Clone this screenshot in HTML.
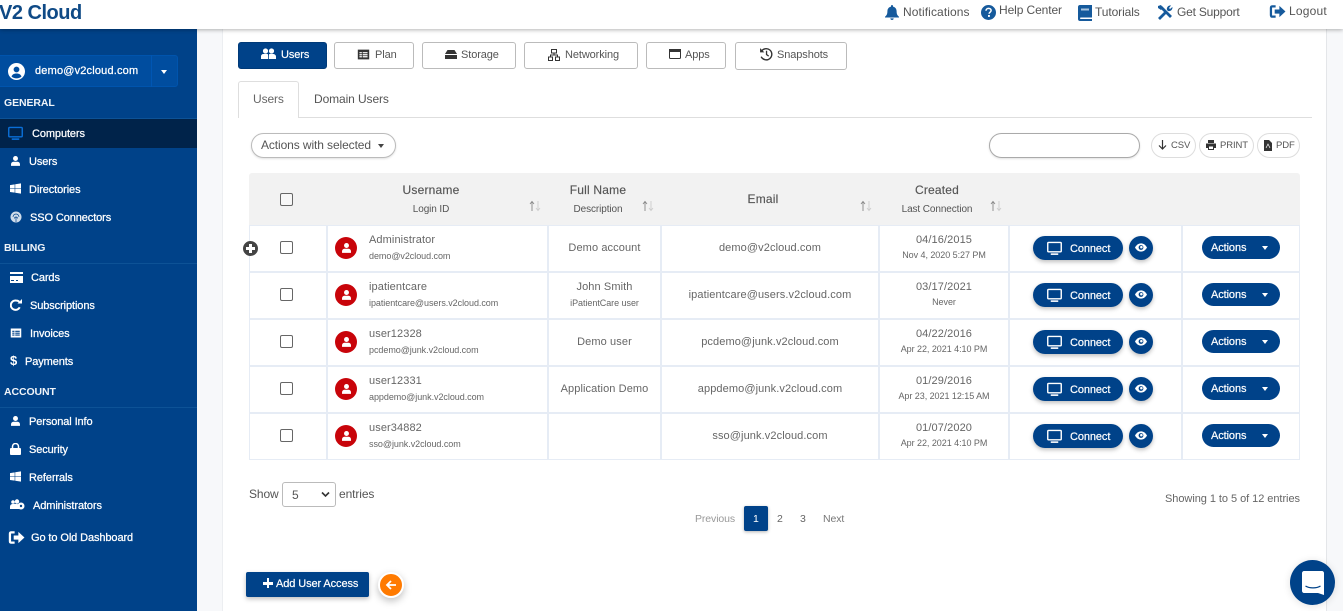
<!DOCTYPE html>
<html><head><meta charset="utf-8"><title>V2 Cloud</title>
<style>
*{box-sizing:border-box}
html,body{margin:0;padding:0;width:1343px;height:611px;overflow:hidden;background:#f7f8fa;font-family:"Liberation Sans",sans-serif;color:#555}
.a,.t,svg.i{position:absolute}
.t{white-space:nowrap;line-height:14px;font-size:12px;letter-spacing:-.1px}
.c{text-align:center}
.top{color:#555;font-size:12px;top:5px}
.s{color:#fff;font-size:11px;font-weight:400;-webkit-text-stroke:.25px #fff;transform:translateY(1px)}
.h{color:#f0f4f9;font-size:10.5px;font-weight:700;left:4px;transform:translateY(1px)}
.b{height:27px;top:42px;border:1px solid #bbb;border-radius:3px;background:#fff}
.bt{font-size:11px;color:#555;top:47px;transform:translateY(1px)}
.sm{font-size:9px;color:#666;letter-spacing:-.05px}
.hs{font-size:10px;color:#555;top:203px;letter-spacing:-.1px}
.hd{font-size:12px;color:#555;letter-spacing:.2px;-webkit-text-stroke:.15px #555}
.n{font-size:11px;color:#666;letter-spacing:.1px;transform:translateY(1px)}
.cb{width:13px;height:13px;border:1px solid #666;border-radius:2px;left:280px;background:#fff}
.av{width:22px;height:22px;border-radius:50%;background:#c8040a;left:335px}
.con{left:1033px;width:90px;height:24px;border-radius:12px;background:#004289;box-shadow:0 2px 4px rgba(0,0,0,.25)}
.eye{left:1129px;width:24px;height:24px;border-radius:50%;background:#004289;box-shadow:0 2px 4px rgba(0,0,0,.25)}
.act{width:78px;height:23px;border-radius:12px;background:#004289;left:1202px}
.w{color:#fff;font-size:11px;-webkit-text-stroke:.2px #fff;transform:translateY(1px)}
.p{border:1px solid #ddd;border-radius:14px;height:25px;top:133px;background:#fff}
.pg{font-size:10.5px;top:511px;transform:translateY(1px)}
.car{width:0;height:0;border-left:3.5px solid transparent;border-right:3.5px solid transparent;border-top:4px solid #fff}
</style></head><body>
<svg width="0" height="0" style="position:absolute"><defs>
<symbol id="user" viewBox="0 0 16 16"><circle cx="8" cy="4.4" r="3.6" fill="currentColor"/><path d="M1.5 15v-2.2C1.5 10.4 3.4 9 5.5 9h5c2.1 0 4 1.4 4 3.8V15z" fill="currentColor"/></symbol>
<symbol id="win" viewBox="0 0 16 16"><path d="M0 3l6.8-1v5.6H0zM7.6 1.8L16 .6v7H7.6zM0 8.4h6.8V14L0 13zM7.6 8.4H16v7l-8.4-1.2z" fill="currentColor"/></symbol>
<symbol id="mon" viewBox="0 0 16 16"><rect x=".8" y="1.5" width="14.4" height="10" rx="1" fill="none" stroke="currentColor" stroke-width="1.5"/><path d="M4 14h8" stroke="currentColor" stroke-width="1.7"/></symbol>
<symbol id="exit" viewBox="0 0 18 16"><path d="M7 2.5H3.5C2.5 2.5 2 3 2 4v8c0 1 .5 1.5 1.5 1.5H7" fill="none" stroke="currentColor" stroke-width="2.4"/><path d="M6 5.8h5V2l6.5 6-6.5 6v-3.8H6z" fill="currentColor"/></symbol>
<symbol id="eye" viewBox="0 0 16 12"><path d="M0 6c2-3.6 4.8-5.5 8-5.5S14 2.4 16 6c-2 3.6-4.8 5.5-8 5.5S2 9.6 0 6z" fill="#fff"/><circle cx="8" cy="6" r="3.2" fill="#004289"/><circle cx="8.5" cy="5.5" r="1.7" fill="#fff"/></symbol>
<symbol id="sort" viewBox="0 0 12 12"><path d="M3 11V2M1 4l2-2.500L5 4" fill="none" stroke="#888" stroke-width=".9"/><path d="M9 1v9M7 8l2 2.500L11 8" fill="none" stroke="#ccc" stroke-width=".9"/></symbol>
<symbol id="tbl" viewBox="0 0 16 16"><path fill-rule="evenodd" d="M1 2h14v12H1zM6 5H3v1.5h3zm7 0H7v1.5h6zM6 7.5H3V9h3zm7 0H7V9h6zM6 10H3v1.5h3zm7 0H7v1.5h6z" fill="currentColor"/></symbol>
</defs></svg>

<!-- panel -->
<div class="a" style="left:222px;top:29px;width:1105px;height:582px;background:#fff;border-left:1px solid #eceef1;border-right:1px solid #e4e6e9"></div>

<!-- sidebar -->
<div class="a" style="left:0;top:29px;width:197px;height:582px;background:#004289"></div>
<div class="a" style="left:-3px;top:55px;width:181px;height:32px;background:#004d9f;border:1px solid #0054ad;border-radius:3px"></div>
<div class="a" style="left:151px;top:55px;width:1px;height:32px;background:#0056b3"></div>
<svg class="i" style="left:8px;top:63px;color:#fff" width="17" height="17" viewBox="0 0 17 17"><circle cx="8.5" cy="8.5" r="8.5" fill="#fff"/><circle cx="8.5" cy="6.5" r="2.9" fill="#004d9f"/><path d="M3.500 13.500c.8-2 2.400-3 5-3s4.200 1 5 3c-1.400 1.300-3 1.900-5 1.900s-3.600-.6-5-1.900z" fill="#004d9f"/></svg>
<div class="t s" style="left:35px;top:63px;font-size:11px;letter-spacing:.18px">demo@v2cloud.com</div>
<div class="a car" style="left:161px;top:70px"></div>
<div class="t h" style="top:95px">GENERAL</div>
<div class="a" style="left:0;top:118px;width:197px;height:1px;background:#0d5296"></div>
<div class="a" style="left:0;top:119px;width:197px;height:29px;background:#00234a"></div>
<svg class="i" style="left:8px;top:126px;color:#0a6fd8" width="15" height="15"><use href="#mon"/></svg>
<div class="t s" style="left:32px;top:126px">Computers</div>
<svg class="i" style="left:10px;top:155px;color:#fff" width="11" height="12"><use href="#user"/></svg>
<div class="t s" style="left:29px;top:154px">Users</div>
<svg class="i" style="left:10px;top:183px;color:#fff" width="11" height="11"><use href="#win"/></svg>
<div class="t s" style="left:29px;top:182px">Directories</div>
<svg class="i" style="left:10px;top:211px" width="12" height="12" viewBox="0 0 12 12"><circle cx="6" cy="6" r="5.5" fill="#cfdcea"/><path d="M3 6a3 3 0 016 0M4.500 7.500a1.500 1.500 0 013 0M6 6v5" fill="none" stroke="#004289" stroke-width=".7"/></svg>
<div class="t s" style="left:30px;top:210px">SSO Connectors</div>
<div class="t h" style="top:240px">BILLING</div>
<div class="a" style="left:0;top:263px;width:197px;height:1px;background:#0d5296"></div>
<svg class="i" style="left:10px;top:272px" width="13" height="11" viewBox="0 0 13 11"><path d="M0 0h13v2H0zM0 4h13v7H0z" fill="#fff"/><path d="M1 8.5h3M6 8.5h2" stroke="#004289"/></svg>
<div class="t s" style="left:31px;top:270px">Cards</div>
<svg class="i" style="left:10px;top:298px" width="12" height="13" viewBox="0 0 12 13"><path d="M9.700 9.300A4.700 4.700 0 116 2.500c1.300 0 2.500.5 3.300 1.300" fill="none" stroke="#fff" stroke-width="2"/><path d="M7.500 5.500H12V1z" fill="#fff"/></svg>
<div class="t s" style="left:30px;top:298px">Subscriptions</div>
<svg class="i" style="left:10px;top:327px;color:#fff" width="12" height="12" viewBox="0 0 16 16"><use href="#tbl"/></svg>
<div class="t s" style="left:30px;top:326px">Invoices</div>
<div class="t" style="left:10px;top:354px;color:#fff;font-size:13px;font-weight:700">$</div>
<div class="t s" style="left:25px;top:354px">Payments</div>
<div class="t h" style="top:384px">ACCOUNT</div>
<div class="a" style="left:0;top:407px;width:197px;height:1px;background:#0d5296"></div>
<svg class="i" style="left:10px;top:415px;color:#fff" width="11" height="12"><use href="#user"/></svg>
<div class="t s" style="left:29px;top:414px">Personal Info</div>
<svg class="i" style="left:10px;top:443px" width="11" height="12" viewBox="0 0 11 12"><path d="M2.500 5V3.500a3 3 0 016 0V5" fill="none" stroke="#fff" stroke-width="1.500"/><rect y="5" width="11" height="7" rx="1" fill="#fff"/></svg>
<div class="t s" style="left:29px;top:442px">Security</div>
<svg class="i" style="left:10px;top:471px;color:#fff" width="11" height="11"><use href="#win"/></svg>
<div class="t s" style="left:29px;top:470px">Referrals</div>
<svg class="i" style="left:10px;top:499px" width="15" height="11" viewBox="0 0 15 11"><circle cx="3" cy="3" r="1.8" fill="#fff"/><circle cx="7" cy="2.5" r="2.2" fill="#fff"/><path d="M0 8c0-2 1-3 3-3s5-.5 6 1v4H0z" fill="#fff"/><circle cx="11" cy="7" r="3.5" fill="#fff"/><circle cx="11" cy="7" r="1.2" fill="#004289"/></svg>
<div class="t s" style="left:33px;top:498px">Administrators</div>
<svg class="i" style="left:8px;top:530px;color:#fff" width="17" height="15"><use href="#exit"/></svg>
<div class="t s" style="left:31px;top:530px">Go to Old Dashboard</div>

<!-- header -->
<div class="a" style="left:0;top:0;width:1343px;height:29px;background:#fff;box-shadow:0 1px 4px rgba(0,0,0,.3)"></div>
<div class="t" style="left:-1px;top:0;font-size:20px;line-height:26px;font-weight:700;color:#0f4a86;letter-spacing:-.5px">V2 Cloud</div>
<svg class="i" style="left:885px;top:5px" width="14" height="15" viewBox="0 0 14 15"><path d="M7 0c.6 0 1 .4 1 1v.6c2.300.5 3.600 2.300 3.600 4.600 0 3 .8 4 2.400 5.600v.7H0v-.7C1.600 10.200 2.400 9.200 2.400 6.200c0-2.300 1.300-4.100 3.600-4.600V1c0-.6.400-1 1-1zM5.300 13.400h3.400C8.700 14.400 8 15 7 15s-1.700-.6-1.700-1.600z" fill="#165a9c"/></svg>
<div class="t top" style="left:903px;letter-spacing:.1px">Notifications</div>
<svg class="i" style="left:981px;top:5px" width="15" height="15" viewBox="0 0 15 15"><circle cx="7.5" cy="7.5" r="7.5" fill="#165a9c"/><path d="M5 5.800c0-1.500 1.100-2.400 2.600-2.400s2.500.9 2.500 2.100c0 1.800-2 1.700-2 3.300" fill="none" stroke="#fff" stroke-width="1.500"/><rect x="7" y="10" width="1.900" height="1.900" fill="#fff"/></svg>
<div class="t top" style="left:999px;top:3px">Help Center</div>
<svg class="i" style="left:1078px;top:5px" width="14" height="16" viewBox="0 0 14 16"><path d="M2 0h12v12.500H3c-.7 0-1 .3-1 .8s.3.700 1 .700h11v2H2c-1.200 0-2-.8-2-2V2C0 .8.800 0 2 0z" fill="#165a9c"/><rect x="3" y="3.500" width="8" height="2" fill="#a9c4de"/></svg>
<div class="t top" style="left:1095px">Tutorials</div>
<svg class="i" style="left:1157px;top:5px" width="16" height="16" viewBox="0 0 16 16"><path d="M2 14L9 7M4 2l10 10" stroke="#165a9c" stroke-width="2.800"/><path d="M1 1l3-1 2 3-2 2-3-2z" fill="#165a9c"/><path d="M10 5a3.500 3.500 0 014-4.500L12 3l1 1 2.400-2A3.500 3.500 0 0111 6z" fill="#165a9c"/></svg>
<div class="t top" style="left:1177px;letter-spacing:-.2px">Get Support</div>
<svg class="i" style="left:1269px;top:4px;color:#165a9c" width="17" height="15"><use href="#exit"/></svg>
<div class="t top" style="left:1289px;top:4px;letter-spacing:.2px">Logout</div>

<!-- top tabs -->
<div class="a b" style="left:238px;width:89px;background:#004289;border-color:#003a78"></div>
<svg class="i" style="left:261px;top:48px" width="15" height="12" viewBox="0 0 15 12"><circle cx="4.5" cy="3" r="2.6" fill="#fff"/><circle cx="10.5" cy="3" r="2.6" fill="#fff"/><path d="M0 11V8.500C0 7 1 6 2.500 6h4C7 6 7.200 7 7.200 8.500V11zM8 11V8c0-1-.1-2 .5-2h3.500C13.500 6 15 7 15 8.500V11z" fill="#fff"/></svg>
<div class="t bt" style="left:281px;color:#fff;-webkit-text-stroke:.2px #fff">Users</div>
<div class="a b" style="left:334px;width:80px"></div>
<svg class="i" style="left:357px;top:48px;color:#333" width="13" height="13" viewBox="0 0 16 16"><use href="#tbl"/></svg>
<div class="t bt" style="left:375px">Plan</div>
<div class="a b" style="left:422px;width:94px"></div>
<svg class="i" style="left:445px;top:50px" width="12" height="9" viewBox="0 0 12 9"><path d="M2.500 0h7L12 4H0zM0 5h12v4H0z" fill="#333"/></svg>
<div class="t bt" style="left:461px">Storage</div>
<div class="a b" style="left:524px;width:114px"></div>
<svg class="i" style="left:548px;top:49px" width="12" height="12" viewBox="0 0 12 12"><path d="M3.500.5h5V4h-5zM.5 8h4v3.500h-4zM7.500 8h4v3.500h-4zM6 4v2M2.500 8V6h7v2" fill="none" stroke="#333"/></svg>
<div class="t bt" style="left:565px">Networking</div>
<div class="a b" style="left:646px;width:80px"></div>
<svg class="i" style="left:669px;top:49px" width="12" height="10" viewBox="0 0 12 10"><rect x=".5" y=".5" width="11" height="9" rx="1" fill="none" stroke="#333"/><rect width="12" height="3" fill="#333"/></svg>
<div class="t bt" style="left:685px">Apps</div>
<div class="a b" style="left:735px;width:112px;height:28px"></div>
<svg class="i" style="left:759px;top:47px" width="14" height="14" viewBox="0 0 13 13"><path d="M2 4.500A5.200 5.200 0 112 9" fill="none" stroke="#333" stroke-width="1.300"/><path d="M1 1v4h4z" fill="#333"/><path d="M7 3.500V7l2 1.500" fill="none" stroke="#333" stroke-width="1.200"/></svg>
<div class="t bt" style="left:777px;top:47px">Snapshots</div>

<!-- tabs -->
<div class="a" style="left:238px;top:117px;width:1074px;height:1px;background:#dedede"></div>
<div class="a" style="left:238px;top:81px;width:61px;height:37px;background:#fff;border:1px solid #dedede;border-bottom:0;border-radius:3px 3px 0 0"></div>
<div class="t" style="left:253px;top:92px;color:#666;font-size:12px">Users</div>
<div class="t" style="left:314px;top:92px;color:#555;font-size:12px">Domain Users</div>

<div class="a" style="left:251px;top:133px;width:145px;height:25px;border:1px solid #bbb;border-radius:13px;box-shadow:0 1px 2px rgba(0,0,0,.12);background:#fff"></div>
<div class="t" style="left:261px;top:138px;color:#555;font-size:12px">Actions with selected</div>
<div class="a car" style="left:378px;top:144px;border-top-color:#444"></div>

<div class="a" style="left:989px;top:133px;width:151px;height:25px;border:1px solid #aaa;border-radius:13px;background:#fff;box-shadow:0 1px 2px rgba(0,0,0,.12)"></div>
<div class="a p" style="left:1151px;width:45px"></div>
<svg class="i" style="left:1158px;top:140px" width="9" height="10" viewBox="0 0 9 10"><path d="M4.500 0v9M1 5.500l3.500 3.500L8 5.500" fill="none" stroke="#333" stroke-width="1.200"/></svg>
<div class="t" style="left:1171px;top:139px;font-size:9.5px;color:#555">CSV</div>
<div class="a p" style="left:1199px;width:55px"></div>
<svg class="i" style="left:1206px;top:140px" width="10" height="10" viewBox="0 0 10 10"><path d="M2 0h6v3H2zM0 3.500h10V8H8v2H2V8H0z" fill="#333"/><rect x="3" y="6.500" width="4" height="2.500" fill="#fff"/></svg>
<div class="t" style="left:1220px;top:139px;font-size:9.5px;color:#555">PRINT</div>
<div class="a p" style="left:1257px;width:43px"></div>
<svg class="i" style="left:1264px;top:140px" width="8" height="11" viewBox="0 0 8 11"><path d="M0 0h5l3 3v8H0z" fill="#333"/><path d="M2 8l2-4 2 4" stroke="#fff" fill="none" stroke-width=".7"/></svg>
<div class="t" style="left:1276px;top:139px;font-size:9.5px;color:#555">PDF</div>

<!-- table header -->
<div class="a" style="left:249px;top:173px;width:1051px;height:52px;background:#f2f2f2;border-radius:3px 3px 0 0"></div>
<div class="a cb" style="top:193px;background:#f7f7f7"></div>
<div class="t c hd" style="left:331px;width:200px;top:183px">Username</div>
<div class="t c hs" style="left:331px;width:200px">Login ID</div>
<svg class="i" style="left:529px;top:200px" width="12" height="12"><use href="#sort"/></svg>
<div class="t c hd" style="left:548px;width:100px;top:183px">Full Name</div>
<div class="t c hs" style="left:548px;width:100px">Description</div>
<svg class="i" style="left:642px;top:200px" width="12" height="12"><use href="#sort"/></svg>
<div class="t c hd" style="left:663px;width:200px;top:192px">Email</div>
<svg class="i" style="left:860px;top:200px" width="12" height="12"><use href="#sort"/></svg>
<div class="t c hd" style="left:887px;width:100px;top:183px">Created</div>
<div class="t c hs" style="left:887px;width:100px">Last Connection</div>
<svg class="i" style="left:990px;top:200px" width="12" height="12"><use href="#sort"/></svg>

<!-- grid -->
<div class="a" style="left:249px;top:225px;width:1051px;height:235px;border:1px solid #e6ecf5;background:#fff"></div>
<div class="a" style="left:249px;top:271px;width:1051px;height:2px;background:#e6ecf5"></div>
<div class="a" style="left:249px;top:318px;width:1051px;height:2px;background:#e6ecf5"></div>
<div class="a" style="left:249px;top:365px;width:1051px;height:2px;background:#e6ecf5"></div>
<div class="a" style="left:249px;top:412px;width:1051px;height:2px;background:#e6ecf5"></div>
<div class="a" style="left:326px;top:225px;width:2px;height:235px;background:#e6ecf5"></div>
<div class="a" style="left:547px;top:225px;width:2px;height:235px;background:#e6ecf5"></div>
<div class="a" style="left:660px;top:225px;width:2px;height:235px;background:#e6ecf5"></div>
<div class="a" style="left:878px;top:225px;width:2px;height:235px;background:#e6ecf5"></div>
<div class="a" style="left:1008px;top:225px;width:2px;height:235px;background:#e6ecf5"></div>
<div class="a" style="left:1181px;top:225px;width:2px;height:235px;background:#e6ecf5"></div>

<!-- plus -->
<div class="a" style="left:243px;top:241px;width:15px;height:15px;border-radius:50%;background:#444"></div>
<div class="a" style="left:246px;top:247px;width:9px;height:3px;background:#fff"></div>
<div class="a" style="left:249px;top:244px;width:3px;height:9px;background:#fff"></div>

<!-- row 1 -->
<div class="a cb" style="top:241px"></div>
<div class="a av" style="top:237px"></div><svg class="i" style="left:341px;top:242px;color:#fff" width="11" height="12"><use href="#user"/></svg>
<div class="t n" style="left:369px;top:232px">Administrator</div>
<div class="t sm" style="left:369px;top:249px">demo@v2cloud.com</div>
<div class="t c n" style="left:549px;width:111px;top:240px">Demo account</div>
<div class="t c n" style="left:662px;width:216px;top:240px">demo@v2cloud.com</div>
<div class="t c n" style="left:880px;width:128px;top:232px">04/16/2015</div>
<div class="t c sm" style="left:880px;width:128px;top:248px">Nov 4, 2020 5:27 PM</div>
<div class="a con" style="top:236px"></div><svg class="i" style="left:1047px;top:241px;color:#fff" width="15" height="15"><use href="#mon"/></svg>
<div class="t w" style="left:1070px;top:241px">Connect</div>
<div class="a eye" style="top:236px"></div><svg class="i" style="left:1135px;top:243px" width="12" height="9"><use href="#eye"/></svg>
<div class="a act" style="top:236px"></div><div class="t w" style="left:1211px;top:240px">Actions</div><div class="a car" style="left:1262px;top:246px"></div>

<!-- row 2 -->
<div class="a cb" style="top:288px"></div>
<div class="a av" style="top:284px"></div><svg class="i" style="left:341px;top:289px;color:#fff" width="11" height="12"><use href="#user"/></svg>
<div class="t n" style="left:369px;top:279px">ipatientcare</div>
<div class="t sm" style="left:369px;top:296px">ipatientcare@users.v2cloud.com</div>
<div class="t c n" style="left:549px;width:111px;top:279px">John Smith</div>
<div class="t c sm" style="left:549px;width:111px;top:296px">iPatientCare user</div>
<div class="t c n" style="left:662px;width:216px;top:287px">ipatientcare@users.v2cloud.com</div>
<div class="t c n" style="left:880px;width:128px;top:279px">03/17/2021</div>
<div class="t c sm" style="left:880px;width:128px;top:295px">Never</div>
<div class="a con" style="top:283px"></div><svg class="i" style="left:1047px;top:288px;color:#fff" width="15" height="15"><use href="#mon"/></svg>
<div class="t w" style="left:1070px;top:288px">Connect</div>
<div class="a eye" style="top:283px"></div><svg class="i" style="left:1135px;top:290px" width="12" height="9"><use href="#eye"/></svg>
<div class="a act" style="top:283px"></div><div class="t w" style="left:1211px;top:287px">Actions</div><div class="a car" style="left:1262px;top:293px"></div>

<!-- row 3 -->
<div class="a cb" style="top:335px"></div>
<div class="a av" style="top:331px"></div><svg class="i" style="left:341px;top:336px;color:#fff" width="11" height="12"><use href="#user"/></svg>
<div class="t n" style="left:369px;top:326px">user12328</div>
<div class="t sm" style="left:369px;top:343px">pcdemo@junk.v2cloud.com</div>
<div class="t c n" style="left:549px;width:111px;top:334px">Demo user</div>
<div class="t c n" style="left:662px;width:216px;top:334px">pcdemo@junk.v2cloud.com</div>
<div class="t c n" style="left:880px;width:128px;top:326px">04/22/2016</div>
<div class="t c sm" style="left:880px;width:128px;top:342px">Apr 22, 2021 4:10 PM</div>
<div class="a con" style="top:330px"></div><svg class="i" style="left:1047px;top:335px;color:#fff" width="15" height="15"><use href="#mon"/></svg>
<div class="t w" style="left:1070px;top:335px">Connect</div>
<div class="a eye" style="top:330px"></div><svg class="i" style="left:1135px;top:337px" width="12" height="9"><use href="#eye"/></svg>
<div class="a act" style="top:330px"></div><div class="t w" style="left:1211px;top:334px">Actions</div><div class="a car" style="left:1262px;top:340px"></div>

<!-- row 4 -->
<div class="a cb" style="top:382px"></div>
<div class="a av" style="top:378px"></div><svg class="i" style="left:341px;top:383px;color:#fff" width="11" height="12"><use href="#user"/></svg>
<div class="t n" style="left:369px;top:373px">user12331</div>
<div class="t sm" style="left:369px;top:390px">appdemo@junk.v2cloud.com</div>
<div class="t c n" style="left:549px;width:111px;top:381px">Application Demo</div>
<div class="t c n" style="left:662px;width:216px;top:381px">appdemo@junk.v2cloud.com</div>
<div class="t c n" style="left:880px;width:128px;top:373px">01/29/2016</div>
<div class="t c sm" style="left:880px;width:128px;top:389px">Apr 23, 2021 12:15 AM</div>
<div class="a con" style="top:377px"></div><svg class="i" style="left:1047px;top:382px;color:#fff" width="15" height="15"><use href="#mon"/></svg>
<div class="t w" style="left:1070px;top:382px">Connect</div>
<div class="a eye" style="top:377px"></div><svg class="i" style="left:1135px;top:384px" width="12" height="9"><use href="#eye"/></svg>
<div class="a act" style="top:377px"></div><div class="t w" style="left:1211px;top:381px">Actions</div><div class="a car" style="left:1262px;top:387px"></div>

<!-- row 5 -->
<div class="a cb" style="top:429px"></div>
<div class="a av" style="top:425px"></div><svg class="i" style="left:341px;top:430px;color:#fff" width="11" height="12"><use href="#user"/></svg>
<div class="t n" style="left:369px;top:420px">user34882</div>
<div class="t sm" style="left:369px;top:437px">sso@junk.v2cloud.com</div>
<div class="t c n" style="left:662px;width:216px;top:428px">sso@junk.v2cloud.com</div>
<div class="t c n" style="left:880px;width:128px;top:420px">01/07/2020</div>
<div class="t c sm" style="left:880px;width:128px;top:436px">Apr 22, 2021 4:10 PM</div>
<div class="a con" style="top:424px"></div><svg class="i" style="left:1047px;top:429px;color:#fff" width="15" height="15"><use href="#mon"/></svg>
<div class="t w" style="left:1070px;top:429px">Connect</div>
<div class="a eye" style="top:424px"></div><svg class="i" style="left:1135px;top:431px" width="12" height="9"><use href="#eye"/></svg>
<div class="a act" style="top:424px"></div><div class="t w" style="left:1211px;top:428px">Actions</div><div class="a car" style="left:1262px;top:434px"></div>

<!-- footer -->
<div class="t" style="left:249px;top:487px;font-size:12px;color:#555">Show</div>
<div class="a" style="left:282px;top:482px;width:54px;height:25px;border:1px solid #bbb;border-radius:3px;background:#fff"></div>
<div class="t" style="left:292px;top:488px;font-size:12px;color:#555">5</div>
<svg class="i" style="left:321px;top:491px" width="9" height="7" viewBox="0 0 9 7"><path d="M1 1.500l3.500 3.500L8 1.500" fill="none" stroke="#333" stroke-width="1.600"/></svg>
<div class="t" style="left:339px;top:487px;font-size:12px;color:#555">entries</div>
<div class="t" style="left:1165px;top:492px;font-size:11px;letter-spacing:-.05px;color:#666">Showing 1 to 5 of 12 entries</div>
<div class="t pg" style="left:695px;color:#999">Previous</div>
<div class="a" style="left:744px;top:506px;width:24px;height:25px;background:#004289;border-radius:2px;box-shadow:0 1px 3px rgba(0,0,0,.3)"></div>
<div class="t pg" style="left:753px;color:#fff">1</div>
<div class="t pg" style="left:777px;color:#666">2</div>
<div class="t pg" style="left:800px;color:#666">3</div>
<div class="t pg" style="left:823px;color:#777">Next</div>

<div class="a" style="left:246px;top:572px;width:123px;height:25px;background:#004289;border-radius:2px;box-shadow:0 2px 5px rgba(0,0,0,.25)"></div>
<div class="a" style="left:263px;top:582px;width:10px;height:2.5px;background:#fff"></div>
<div class="a" style="left:266.8px;top:578px;width:2.5px;height:10px;background:#fff"></div>
<div class="t w" style="left:276px;top:576px">Add User Access</div>
<div class="a" style="left:378px;top:572px;width:26px;height:26px;border-radius:50%;background:#ff7a00;border:2px solid #fff;box-shadow:0 3px 8px rgba(0,0,0,.25)"></div>
<svg class="i" style="left:385px;top:579px" width="12" height="12" viewBox="0 0 12 12"><path d="M11 6H2M6 2L2 6l4 4" fill="none" stroke="#fff" stroke-width="1.800"/></svg>

<!-- chat -->
<div class="a" style="left:1290px;top:560px;width:45px;height:45px;border-radius:50%;background:#004289;box-shadow:0 1px 8px rgba(0,0,0,.12)"></div>
<svg class="i" style="left:1302px;top:571px" width="22" height="24" viewBox="0 0 22 24"><path d="M2 0h18c1 0 2 1 2 2v22l-6-2H2c-1 0-2-1-2-2V2C0 1 1 0 2 0z" fill="#fff"/><path d="M3.500 15c4 2.500 11 2.500 15 0" fill="none" stroke="#004289" stroke-width="1.200"/></svg>
</body></html>
